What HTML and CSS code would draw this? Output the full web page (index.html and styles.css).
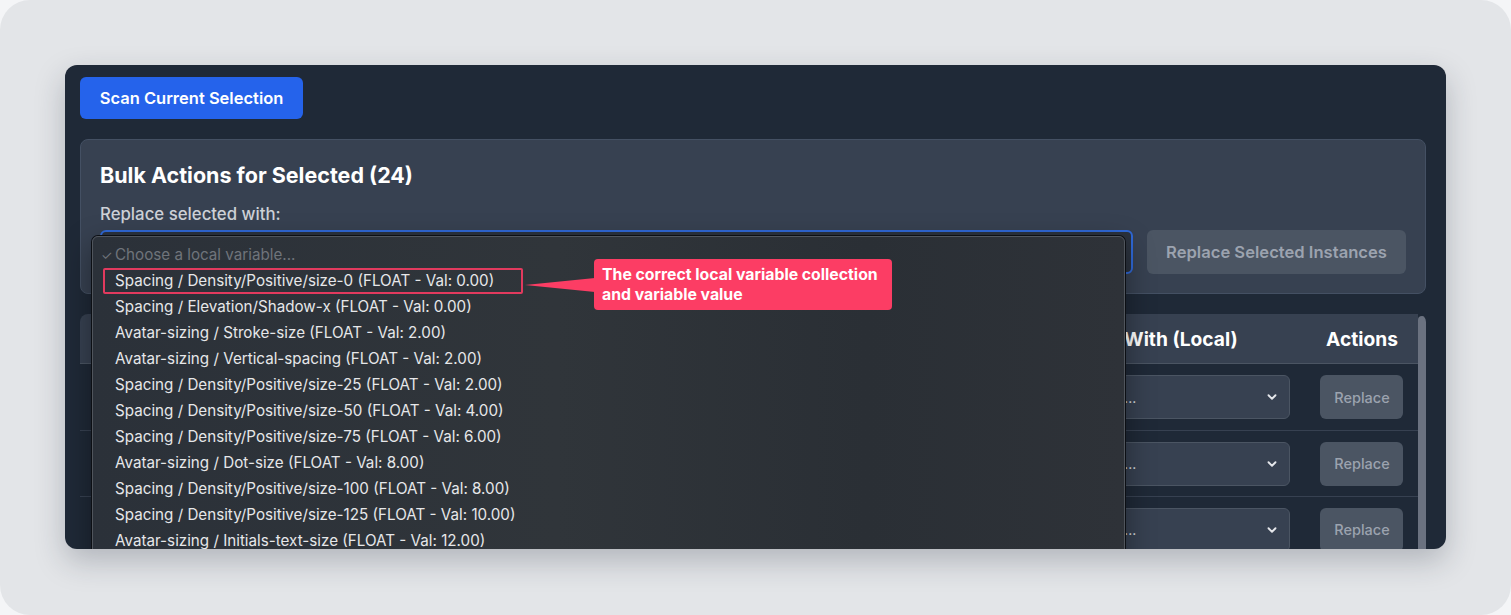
FILE: index.html
```html
<!DOCTYPE html>
<html lang="en">
<head>
<meta charset="utf-8">
<title>Variable Replacer</title>
<link rel="stylesheet" href="styles.css">
</head>
<body>
<div class="frame">
  <div class="app">
    <div class="content">
      <button class="btn-scan">Scan Current Selection</button>

      <section class="bulk">
        <h2 class="bulk-title">Bulk Actions for Selected (24)</h2>
        <div class="bulk-label">Replace selected with:</div>
        <div class="bulk-controls">
          <div class="select select-focus"></div>
          <button class="btn-muted btn-bulk">Replace Selected Instances</button>
        </div>
      </section>

      <section class="table-card">
        <div class="table">
          <div class="row row-head">
            <div class="cell"></div>
            <div class="cell"></div>
            <div class="cell"></div>
            <div class="cell cell-center">Replace With (Local)</div>
            <div class="cell cell-center">Actions</div>
          </div>
          <div class="row">
            <div class="cell"></div><div class="cell"></div><div class="cell"></div>
            <div class="cell"><div class="select select-row"><span>Choose a variable...</span><svg class="chev" viewBox="0 0 12 12"><path d="M3 4.5 6 7.5 9 4.5" fill="none" stroke="#e5e7eb" stroke-width="1.6" stroke-linecap="round" stroke-linejoin="round"/></svg></div></div>
            <div class="cell cell-center"><button class="btn-muted btn-row">Replace</button></div>
          </div>
          <div class="row">
            <div class="cell"></div><div class="cell"></div><div class="cell"></div>
            <div class="cell"><div class="select select-row"><span>Choose a variable...</span><svg class="chev" viewBox="0 0 12 12"><path d="M3 4.5 6 7.5 9 4.5" fill="none" stroke="#e5e7eb" stroke-width="1.6" stroke-linecap="round" stroke-linejoin="round"/></svg></div></div>
            <div class="cell cell-center"><button class="btn-muted btn-row">Replace</button></div>
          </div>
          <div class="row">
            <div class="cell"></div><div class="cell"></div><div class="cell"></div>
            <div class="cell"><div class="select select-row"><span>Choose a variable...</span><svg class="chev" viewBox="0 0 12 12"><path d="M3 4.5 6 7.5 9 4.5" fill="none" stroke="#e5e7eb" stroke-width="1.6" stroke-linecap="round" stroke-linejoin="round"/></svg></div></div>
            <div class="cell cell-center"><button class="btn-muted btn-row">Replace</button></div>
          </div>
        </div>
        <div class="scrollbar"></div>
      </section>
    </div>

    <div class="popup">
      <ul class="options">
        <li class="opt opt-placeholder"><span class="check">✓</span>Choose a local variable...</li>
        <li class="opt">Spacing / Density/Positive/size-0 (FLOAT - Val: 0.00)</li>
        <li class="opt">Spacing / Elevation/Shadow-x (FLOAT - Val: 0.00)</li>
        <li class="opt">Avatar-sizing / Stroke-size (FLOAT - Val: 2.00)</li>
        <li class="opt">Avatar-sizing / Vertical-spacing (FLOAT - Val: 2.00)</li>
        <li class="opt">Spacing / Density/Positive/size-25 (FLOAT - Val: 2.00)</li>
        <li class="opt">Spacing / Density/Positive/size-50 (FLOAT - Val: 4.00)</li>
        <li class="opt">Spacing / Density/Positive/size-75 (FLOAT - Val: 6.00)</li>
        <li class="opt">Avatar-sizing / Dot-size (FLOAT - Val: 8.00)</li>
        <li class="opt">Spacing / Density/Positive/size-100 (FLOAT - Val: 8.00)</li>
        <li class="opt">Spacing / Density/Positive/size-125 (FLOAT - Val: 10.00)</li>
        <li class="opt">Avatar-sizing / Initials-text-size (FLOAT - Val: 12.00)</li>
      </ul>
      <div class="hl-box"></div>
      <svg class="pointer" viewBox="0 0 70 20" width="70" height="20"><polygon points="0,10 70,3 70,17" fill="#fc3d64"/></svg>
      <div class="callout">The correct local variable collection and variable value</div>
    </div>
  </div>
</div>
</body>
</html>
```

FILE: styles.css
```css
* { box-sizing: border-box; }

html, body {
  margin: 0;
  padding: 0;
}

body {
  width: 1511px;
  height: 615px;
  overflow: hidden;
  background: #f4f5f7;
  font-family: Inter, "Liberation Sans", sans-serif;
}

.frame {
  height: 615px;
  border-radius: 30px;
  background: #e3e5e8;
  padding: 65px 65px 0 65px;
}

.app {
  position: relative;
  height: 484px;
  border-radius: 12px;
  background: #1f2937;
  overflow: hidden;
  box-shadow: 0 12px 30px rgba(30, 40, 55, 0.25);
}

.content {
  display: flex;
  flex-direction: column;
  gap: 20px;
  padding: 12px 20px 0 15px;
}

button {
  font-family: inherit;
  border: none;
  cursor: pointer;
}

.btn-scan {
  align-self: flex-start;
  width: 223px;
  height: 42px;
  padding: 0;
  border-radius: 6px;
  background: #2563eb;
  color: #ffffff;
  font-size: 16.5px;
  font-weight: 600;
}

.bulk {
  background: #374151;
  border: 1px solid #445063;
  border-radius: 8px;
  padding: 19px 19px 19px 19px;
}

.bulk-title {
  margin: 0;
  font-size: 21.5px;
  line-height: 32px;
  font-weight: 700;
  color: #ffffff;
}

.bulk-label {
  margin-top: 13px;
  font-size: 16.8px;
  line-height: 20px;
  font-weight: 500;
  color: #cdd1d7;
}

.bulk-controls {
  margin-top: 6px;
  display: flex;
  gap: 14px;
}

.select {
  height: 44px;
  border-radius: 6px;
}

.select-focus {
  flex: 1;
  border: 2px solid #2f68d6;
  background: #2b323d;
}

.btn-muted {
  background: #4b5563;
  color: #9ca3af;
  border-radius: 6px;
}

.btn-bulk {
  width: 259px;
  height: 44px;
  padding: 0;
  font-size: 16.6px;
  font-weight: 600;
}

.table-card {
  display: flex;
  border-radius: 8px 8px 0 0;
  overflow: hidden;
}

.table {
  flex: 1;
}

.row {
  display: grid;
  grid-template-columns: 1fr 1fr 1fr 330px 112px;
  height: 66px;
  border-top: 1px solid #374151;
  align-items: center;
}

.row-head {
  height: 50px;
  border-top: none;
  background: #374151;
  border-bottom: 1px solid #4b5563;
  color: #ffffff;
  font-size: 19.2px;
  font-weight: 700;
}

.row-head + .row {
  border-top: none;
  height: 66px;
}

.cell {
  padding: 0 16px;
}

.cell-center {
  text-align: center;
  white-space: nowrap;
}

.row .cell:nth-child(5) {
  padding: 0;
}

.select-row {
  display: flex;
  align-items: center;
  justify-content: space-between;
  padding: 0 10px 0 12px;
  background: #374151;
  border: 1px solid #4b5563;
  color: #e5e7eb;
  font-size: 14px;
}

.chev {
  width: 14px;
  height: 14px;
}

.btn-row {
  width: 83px;
  height: 44px;
  padding: 0;
  font-size: 14.5px;
  font-weight: 500;
}

.scrollbar {
  width: 8px;
  margin-top: 2px;
  background: #6b7280;
  border-radius: 4px 4px 0 0;
}

/* native popup list */
.popup {
  position: absolute;
  left: 27px;
  top: 171px;
  width: 1033px;
  height: 340px;
  border-radius: 6px;
  border: 1px solid #50555c;
  background: linear-gradient(90deg, #2b3139 0%, #30353a 45%, #2a2f35 75%, #2e3238 100%);
  box-shadow: 0 0 0 1px #0c0f14, 0 10px 30px rgba(0, 0, 0, 0.4);
  font-family: Inter, "Noto Sans", sans-serif;
}

.options {
  list-style: none;
  margin: 0;
  padding: 5px 0 0 0;
}

.opt {
  height: 26px;
  line-height: 26px;
  padding-left: 22px;
  font-size: 15.2px;
  color: #e6e7e9;
  white-space: nowrap;
}

.opt-placeholder {
  position: relative;
  color: #6f747b;
}

.check {
  position: absolute;
  left: 8px;
  font-size: 13px;
}

.hl-box {
  position: absolute;
  left: 10px;
  top: 31px;
  width: 420px;
  height: 26px;
  border: 2px solid #e23a5e;
  border-radius: 2px;
}

.pointer {
  position: absolute;
  left: 432px;
  top: 38px;
}

.callout {
  position: absolute;
  left: 501px;
  top: 22px;
  width: 298px;
  height: 51px;
  padding: 6px 8px 5px;
  border-radius: 4px;
  background: #fc3d64;
  color: #ffffff;
  font-family: Inter, sans-serif;
  font-size: 15.8px;
  line-height: 20px;
  font-weight: 700;
}
```
